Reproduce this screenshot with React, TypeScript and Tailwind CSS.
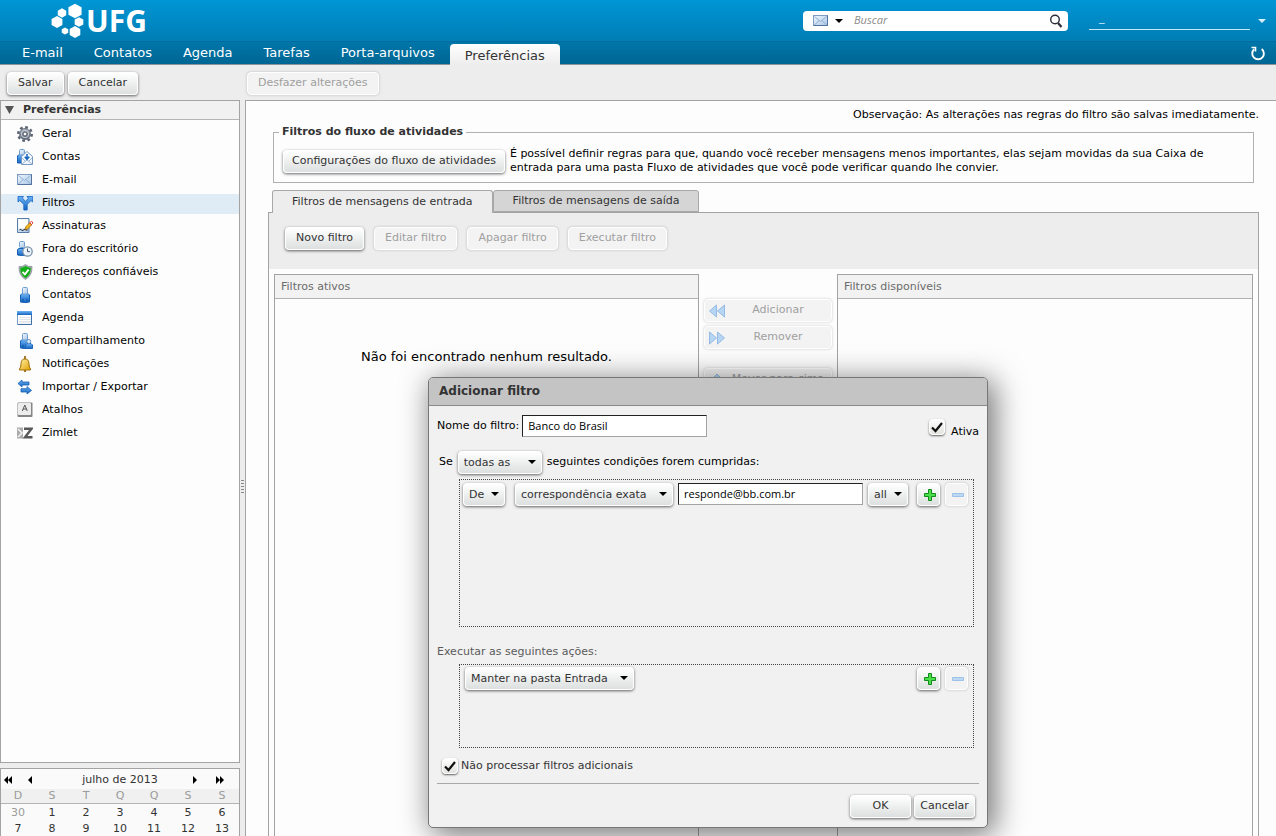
import { useState, type ReactNode } from "react";
import clsx from "clsx";

type IconName =
  | "gear"
  | "account"
  | "mail"
  | "filter"
  | "signature"
  | "away"
  | "shield"
  | "person"
  | "calendar"
  | "share"
  | "bell"
  | "transfer"
  | "key"
  | "zimlet";

const NAV_ITEMS = ["E-mail", "Contatos", "Agenda", "Tarefas", "Porta-arquivos"];

const PREFERENCES: { label: string; icon: IconName }[] = [
  { label: "Geral", icon: "gear" },
  { label: "Contas", icon: "account" },
  { label: "E-mail", icon: "mail" },
  { label: "Filtros", icon: "filter" },
  { label: "Assinaturas", icon: "signature" },
  { label: "Fora do escritório", icon: "away" },
  { label: "Endereços confiáveis", icon: "shield" },
  { label: "Contatos", icon: "person" },
  { label: "Agenda", icon: "calendar" },
  { label: "Compartilhamento", icon: "share" },
  { label: "Notificações", icon: "bell" },
  { label: "Importar / Exportar", icon: "transfer" },
  { label: "Atalhos", icon: "key" },
  { label: "Zimlet", icon: "zimlet" },
];

const WEEKDAYS = ["D", "S", "T", "Q", "Q", "S", "S"];
const WEEKS = [
  [30, 1, 2, 3, 4, 5, 6],
  [7, 8, 9, 10, 11, 12, 13],
];

function Gradients() {
  return (
    <svg className="absolute size-0" aria-hidden="true">
      <defs>
        <linearGradient id="blue" x1="0" y1="0" x2="0" y2="1">
          <stop offset="0" stopColor="#6db3f5" />
          <stop offset="1" stopColor="#1464c0" />
        </linearGradient>
        <linearGradient id="pale" x1="0" y1="0" x2="1" y2="1">
          <stop offset="0" stopColor="#f2f8fd" />
          <stop offset="1" stopColor="#a9c6e6" />
        </linearGradient>
        <linearGradient id="gold" x1="0" y1="0" x2="1" y2="1">
          <stop offset="0" stopColor="#fff2a8" />
          <stop offset="1" stopColor="#e0a000" />
        </linearGradient>
        <linearGradient id="steel" x1="0" y1="0" x2="0" y2="1">
          <stop offset="0" stopColor="#a9b0bb" />
          <stop offset="1" stopColor="#5d6676" />
        </linearGradient>
      </defs>
    </svg>
  );
}

function Person() {
  return (
    <>
      <path d="M3.500 8 5 6.500h6L12.500 8v7q-4.500 1-9 0z" fill="url(#blue)" stroke="#1560b4" />
      <rect x="5.500" y=".5" width="5" height="6.500" rx="1" fill="url(#pale)" stroke="#6f9fd0" />
      <path d="M6 11.500V15M10 11.500V15" stroke="#0d55a8" />
    </>
  );
}

function Envelope() {
  return (
    <>
      <rect x=".5" y="2.500" width="14" height="10" fill="url(#pale)" stroke="#7f9dc0" />
      <path d="M14.500 2.500v10H1" fill="none" stroke="#54739c" />
      <path d="m1.500 3.500 6 5 6-5M1.500 12 6 7.500M13.500 12 9 7.500" fill="none" stroke="#8eadd2" />
    </>
  );
}

const DRAWINGS: Record<IconName, ReactNode> = {
  gear: (
    <>
      <circle cx="8" cy="8" r="6.800" fill="none" stroke="#596272" strokeWidth="2.400" strokeDasharray="2.700 2.640" />
      <circle cx="8" cy="8" r="5.500" fill="url(#steel)" stroke="#5b6473" strokeWidth=".8" />
      <circle cx="8" cy="8" r="3.700" fill="none" stroke="#c6ccd4" />
      <circle cx="8" cy="8" r="2" fill="#fff" stroke="#4d5665" />
    </>
  ),
  account: (
    <>
      <path d="M.5 7 2 5.500h5V14H.5z" fill="url(#blue)" stroke="#1560b4" />
      <rect x="2.500" y=".5" width="5" height="5.500" rx="1" fill="url(#pale)" stroke="#6f9fd0" />
      <path d="M4.500 7.500 10 2.500l5.500 5v8h-11z" fill="#f1f7fc" stroke="#7698c2" />
      <path d="m5 15 5-4 5 4M5 9l3 3M15 9l-3 3" fill="none" stroke="#9ab6d6" />
      <path d="M10 5v5M7.800 7.800 10 10.300l2.200-2.500" fill="none" stroke="#1464c0" strokeWidth="1.500" />
    </>
  ),
  mail: <Envelope />,
  filter: (
    <path
      d="M1 1.500h5.500L5.300 2.900 8.500 6.400 11.300 3.300 10 1.500H15.700V7L14 5.600 10.200 9.300V15H6.800V9.300L2.700 5.500 1 7z"
      fill="url(#blue)"
      stroke="#0f62c4"
      strokeWidth=".8"
    />
  ),
  signature: (
    <>
      <path d="M.5.5h11.500v14H.5z" fill="url(#pale)" stroke="#5a7da5" />
      <path d="M1.500 1.500h9.500v9H1.500z" fill="#fff" />
      <path d="M2.500 12q1.500-1.500 2 0t2 0 2 0h2" fill="none" stroke="#111" />
      <path d="m8 11.500.7-2.700 4-4 2.100 2.100-4.100 4z" fill="#f2b821" stroke="#97630a" strokeWidth=".7" />
      <path d="m12.700 4.800 1-1q1-.6 1.700.2.700 1-.1 1.700l-.8.900z" fill="#fff" stroke="#e02222" />
    </>
  ),
  away: (
    <>
      <path d="M.5 8.500 2 7.500h7V14q-4 1-8.500 0z" fill="url(#blue)" stroke="#1560b4" />
      <rect x="2.500" y=".5" width="5" height="6" rx="1" fill="url(#pale)" stroke="#6f9fd0" />
      <circle cx="10.500" cy="10.500" r="4.700" fill="#eef4fa" stroke="#7690aa" strokeWidth="1.300" />
      <path d="M10.500 7.500v3.200h2.500" fill="none" stroke="#405a78" />
    </>
  ),
  shield: (
    <>
      <path d="M8.500.5Q11 3 15 2.500q.5 9-6.500 13-7-4-6.500-13 4 .5 6.500-2z" fill="#aab0b6" stroke="#7f878e" strokeWidth=".7" />
      <path d="M8.500 2Q11 4 13.800 3.800q.2 7-5.300 10.400Q3 10.800 3.200 3.800 6 4 8.500 2z" fill="#12ad17" />
      <path d="m5.500 7.800 2.400 2.600 3.700-4.800" fill="none" stroke="#fff" strokeWidth="1.900" />
    </>
  ),
  person: <Person />,
  calendar: (
    <>
      <path d="M.5 1.500h14v13H.5z" fill="#fff" stroke="#739bc8" />
      <path d="M0 1h15v4H0z" fill="url(#blue)" />
      <path d="M2.500 7.500h11M2.500 9.500h11M2.500 11.500h11M2.500 13h11" stroke="#bec8d2" strokeDasharray="1 1" />
      <path d="M14.500 5v9.500H1" fill="none" stroke="#3f71a9" />
    </>
  ),
  share: (
    <>
      <Person />
      <path d="M8.500 12 10 10.500h4l1.500 1.500v3.500h-7z" fill="url(#blue)" stroke="#1d64b2" />
      <circle cx="11.800" cy="8.500" r="2" fill="#d7e8f8" stroke="#6795c6" />
    </>
  ),
  bell: (
    <>
      <path d="M8 0v3M8 14v2" stroke="#91640a" strokeWidth="1.700" />
      <path d="M2.500 13q1.500-1.500 1.500-5Q4 3 8 3t4 5q0 3.500 1.500 5v1h-11z" fill="url(#gold)" stroke="#a2700b" />
    </>
  ),
  transfer: (
    <>
      <path d="M1 4.500 5 1v2h7v3H5v2z" fill="url(#blue)" stroke="#1560b4" strokeWidth=".8" />
      <path d="M14.500 11.500 10 7.500v2.200H4v3.300h6V15z" fill="url(#blue)" stroke="#1560b4" strokeWidth=".8" />
    </>
  ),
  key: (
    <>
      <rect x=".5" y=".5" width="15" height="14.500" rx="1" fill="#858585" />
      <rect x="1" y="1" width="13" height="12" rx="1" fill="#ececec" />
      <path d="m5.300 9 2.500-6 2.500 6M6 7h3.600" fill="none" stroke="#555" />
    </>
  ),
  zimlet: (
    <>
      <path d="M0 2.500h6v11H0z" fill="#ababab" />
      <path d="m1 4 4 4-4 4" fill="none" stroke="#f2f2f2" strokeWidth="1.500" />
      <path d="M7 3.700h7.500L8 12.300h7.500" fill="none" stroke="#575757" strokeWidth="2.400" />
    </>
  ),
};

function Icon({ name }: { name: IconName }) {
  return (
    <svg viewBox="0 0 16 16" className="size-4 shrink-0" aria-hidden="true">
      {DRAWINGS[name]}
    </svg>
  );
}

function Caret({ className }: { className?: string }) {
  return (
    <svg viewBox="0 0 8 4" className={clsx("h-1 w-2 shrink-0 fill-current", className)} aria-hidden="true">
      <path d="M0 0h8L4 4z" />
    </svg>
  );
}

function Button({
  children,
  className = "",
  ...props
}: React.ButtonHTMLAttributes<HTMLButtonElement>) {
  return (
    <button
      type="button"
      className={clsx(
        "flex h-[23px] shrink-0 items-center justify-center whitespace-nowrap rounded-[4px] border border-white",
        props.disabled
          ? "bg-[#f3f3f3] text-[#a0a0a0] shadow-[0_0_3px_#0003]"
          : "bg-linear-to-b from-white to-[#dde0e0] text-[#333] shadow-[0_1px_3px_#0009]",
        className
      )}
      {...props}
    >
      {children}
    </button>
  );
}

function Select({ label, value, className }: { label: string; value: string; className: string }) {
  return (
    <div className={clsx("relative shrink-0", className)}>
      <select
        aria-label={label}
        className="block h-[23px] w-full appearance-none rounded-[4px] border border-white bg-linear-to-b from-white to-[#dde0e0] pt-px pl-[5px] text-[#333] shadow-[0_1px_3px_#0009]"
      >
        <option>{value}</option>
      </select>
      <Caret className="pointer-events-none absolute top-[9px] right-[6px] text-black" />
    </div>
  );
}

function Checkbox({ id }: { id: string }) {
  const [checked, setChecked] = useState(true);
  return (
    <span className="relative size-4 shrink-0">
      <input
        id={id}
        type="checkbox"
        checked={checked}
        onChange={() => setChecked(!checked)}
        className="block size-4 appearance-none rounded-[4px] border border-white bg-linear-to-b from-white to-[#e2e2de] shadow-[0_1px_2px_#0009]"
      />
      {checked && (
        <svg viewBox="0 0 16 16" className="pointer-events-none absolute inset-0 size-4" aria-hidden="true">
          <path d="m3 8.500 3.500 3.500L13 4" fill="none" stroke="#111" strokeWidth="2.200" />
        </svg>
      )}
    </span>
  );
}

function PlusMinus({ target }: { target: string }) {
  return (
    <div className="flex shrink-0 gap-[5px]">
      <Button className="w-[23px]" aria-label={`Adicionar ${target}`}>
        <svg viewBox="0 0 12 12" className="ml-[3px] size-3 shrink-0" aria-hidden="true">
          <path d="M4.500.5h3v4h4v3h-4v4h-3v-4h-4v-3h4z" fill="#4cdf4c" stroke="#108a18" />
        </svg>
      </Button>
      <Button className="w-[23px]" aria-label={`Remover ${target}`} disabled>
        <svg viewBox="0 0 12 12" className="ml-[3px] size-3 shrink-0" aria-hidden="true">
          <path d="M.5 4.500h11v3H.5z" fill="#bcd8f3" stroke="#9fc2e8" />
        </svg>
      </Button>
    </div>
  );
}

function Logo() {
  const cells = [
    [24, 11, 7.3],
    [11, 13, 4.7],
    [6, 22, 6],
    [28, 22, 4.8],
    [14, 31, 3.6],
    [24, 32, 5.9],
  ];
  return (
    <a href="#" className="ml-[51px] flex items-start gap-px text-white">
      <svg viewBox="0 0 34 40" className="h-10 w-[34px]" aria-hidden="true">
        {cells.map(([x, y, r]) => (
          <polygon
            key={`${x}-${y}`}
            fill="white"
            points={`${x},${y - r} ${x + r * 0.9},${y - r / 2} ${x + r * 0.9},${y + r / 2} ${x},${y + r} ${x - r * 0.9},${y + r / 2} ${x - r * 0.9},${y - r / 2}`}
          />
        ))}
      </svg>
      <span className="font-['Noto_Sans',sans-serif] text-[30px] leading-[42px] font-bold">UFG</span>
    </a>
  );
}

function Header() {
  return (
    <header className="shrink-0">
      <div className="flex h-[41px] justify-between bg-linear-to-b from-[#0096d6] to-[#007db4]">
        <Logo />
        <div className="flex items-center pr-[10px]">
          <form className="flex h-5 w-[265px] items-center rounded-[4px] bg-white pr-[5px] pl-[10px]">
            <button type="button" aria-label="Tipo de busca" className="flex items-center gap-[6px] text-black">
              <Icon name="mail" />
              <Caret />
            </button>
            <input
              aria-label="Buscar"
              placeholder="Buscar"
              className="ml-[11px] min-w-0 flex-1 font-['Open_Sans',sans-serif] outline-none placeholder:text-[#8b8b8b] placeholder:italic"
            />
            <button type="button" aria-label="Pesquisar">
              <svg viewBox="0 0 14 14" className="size-[14px]" fill="none" stroke="#2b2f3a" aria-hidden="true">
                <circle cx="6" cy="5.500" r="4.300" strokeWidth="1.400" />
                <path d="m9 9 3.500 4" strokeWidth="2.200" />
              </svg>
            </button>
          </form>
          <button type="button" aria-label="Conta" className="ml-[21px] flex items-center gap-[8px] text-[#d5eefa]">
            <span className="h-[19px] w-[161px] border-b border-[#c5e8f7] pl-[10px] text-left leading-[14px]">_</span>
            <Caret />
          </button>
        </div>
      </div>
      <nav className="flex h-6 items-center justify-between border-t border-b border-t-[#006c9f] border-b-[#8d9499] bg-linear-to-b from-[#0076a8] to-[#006694] pr-[10px] text-[13px]">
        <div className="flex h-full items-center">
          <ul className="flex gap-[31px] pr-[15px] pl-[22px] text-white">
            {NAV_ITEMS.map((item) => (
              <li key={item}>
                <a href="#">{item}</a>
              </li>
            ))}
          </ul>
          <a
            href="#"
            aria-current="page"
            className="z-10 -mb-[3px] h-[21px] rounded-t-[4px] bg-linear-to-b from-white to-[#ededed] px-[15px] leading-6 text-[#333]"
          >
            Preferências
          </a>
        </div>
        <button type="button" aria-label="Atualizar">
          <svg viewBox="0 0 16 16" className="size-4" fill="none" stroke="white" strokeWidth="1.900" aria-hidden="true">
            <path d="M4.200 4.200A5.800 5.800 0 1 0 11.700 4" />
            <path d="M1.500 2.500h4V6.500" strokeWidth="1.600" />
          </svg>
        </button>
      </nav>
    </header>
  );
}

function ArrowIcon({ path }: { path: string }) {
  return (
    <svg viewBox="0 0 10 8" className="h-2 w-[10px] fill-black" aria-hidden="true">
      <path d={path} />
    </svg>
  );
}

function MiniCalendar() {
  return (
    <section className="mt-[5px] border border-b-0 border-[#a3a3a3] bg-[#fafafa] text-[#333]">
      <div className="flex h-5 items-center px-[3px] pt-[2px]">
        <div className="flex w-12 gap-3">
          <button type="button" aria-label="Ano anterior">
            <ArrowIcon path="M4 0v8L0 4zM8 0v8L4 4z" />
          </button>
          <button type="button" aria-label="Mês anterior">
            <ArrowIcon path="M6 0v8L2 4z" />
          </button>
        </div>
        <span className="flex-1 text-center">julho de 2013</span>
        <div className="flex w-12 gap-4">
          <button type="button" aria-label="Próximo mês">
            <ArrowIcon path="M5 0v8l4-4z" />
          </button>
          <button type="button" aria-label="Próximo ano">
            <ArrowIcon path="M2 0v8l4-4zM6 0v8l4-4z" />
          </button>
        </div>
      </div>
      <table className="w-full table-fixed text-center">
        <thead className="border-b border-[#b5b5b5] bg-[#f0f0f0] text-[#9a9a9a]">
          <tr>
            {WEEKDAYS.map((day, i) => (
              <th key={i} scope="col" className="font-normal leading-[14px]">
                {day}
              </th>
            ))}
          </tr>
        </thead>
        <tbody>
          {WEEKS.map((week) => (
            <tr key={week[0]}>
              {week.map((day) => (
                <td key={day} className={clsx("pt-px leading-[15px]", day === 30 && "text-[#9a9a9a]")}>
                  {day}
                </td>
              ))}
            </tr>
          ))}
        </tbody>
      </table>
    </section>
  );
}

function Sidebar() {
  const [selected, setSelected] = useState(3);
  return (
    <aside className="flex w-60 shrink-0 flex-col">
      <section className="flex-1 border border-[#a3a3a3] bg-[#fdfdfd]">
        <h2 className="flex h-[19px] items-center gap-[9px] border-b border-[#b5b5b5] bg-[#f1f1f1] pl-1 font-bold text-[#333]">
          <svg viewBox="0 0 9 8" className="h-2 w-[9px] fill-[#555]" aria-hidden="true">
            <path d="M0 0h9L4.500 8z" />
          </svg>
          Preferências
        </h2>
        <ul className="flex flex-col gap-[3px] pt-[5px]">
          {PREFERENCES.map((item, i) => (
            <li key={item.label + i}>
              <button
                type="button"
                onClick={() => setSelected(i)}
                className={clsx(
                  "flex h-5 w-full items-start gap-[9px] pl-4 text-left leading-[18px]",
                  i === selected && "bg-[#dfebf5]"
                )}
              >
                <span className="pt-px">
                  <Icon name={item.icon} />
                </span>
                {item.label}
              </button>
            </li>
          ))}
        </ul>
      </section>
      <MiniCalendar />
    </aside>
  );
}

function FilterList({ title, children, className }: { title: string; children?: ReactNode; className: string }) {
  return (
    <section className={clsx("border border-[#a3a3a3]", className)}>
      <h3 className="h-6 border-b border-[#b0b0b0] bg-[#f2f2f2] pl-[6px] leading-6 text-[#6b6b6b]">{title}</h3>
      {children}
    </section>
  );
}

function MoveButton({ label, path, className }: { label: string; path: string; className?: string }) {
  return (
    <Button disabled className={clsx("w-full pl-1", className)}>
      <svg viewBox="0 0 16 14" className="h-[14px] w-4 shrink-0" fill="#b5d5f3" stroke="#95bbe4" aria-hidden="true">
        <path d={path} />
      </svg>
      <span className="flex-1 text-center">{label}</span>
    </Button>
  );
}

function FiltersPage() {
  return (
    <main className="flex min-w-0 flex-1 flex-col overflow-hidden border-t border-l border-[#a3a3a3] bg-[#fdfdfd] pr-[17px] pl-[22px]">
      <p className="pt-[6px] text-right leading-4">
        Observação: As alterações nas regras do filtro são salvas imediatamente.
      </p>
      <fieldset className="mx-[5px] mt-px flex border border-[#b0b0b0] px-[5px]">
        <legend className="px-[3px] leading-4 font-bold text-[#333]">Filtros do fluxo de atividades</legend>
        <div className="flex items-center gap-[5px] py-[7px] pl-1">
          <Button className="px-2">Configurações do fluxo de atividades</Button>
          <p className="pr-2 leading-[14px]">
            É possível definir regras para que, quando você receber mensagens menos importantes, elas sejam movidas da
            sua Caixa de entrada para uma pasta Fluxo de atividades que você pode verificar quando lhe convier.
          </p>
        </div>
      </fieldset>

      <div role="tablist" className="mt-[7px] flex pl-1 text-[#333]">
        <button
          role="tab"
          aria-selected="true"
          type="button"
          className="z-10 -mb-px h-[23px] rounded-t-[3px] border border-b-0 border-[#a8a8a8] bg-[#ededed] px-[19px]"
        >
          Filtros de mensagens de entrada
        </button>
        <button
          role="tab"
          aria-selected="false"
          type="button"
          className="h-[22px] rounded-t-[3px] border border-[#a8a8a8] bg-[#d5d5d5] px-[19px]"
        >
          Filtros de mensagens de saída
        </button>
      </div>

      <div className="flex flex-1 flex-col border border-b-0 border-[#a3a3a3]">
        <div className="flex h-14 shrink-0 gap-[10px] bg-[#ededed] pt-[14px] pl-4">
          <Button className="px-[10px]">Novo filtro</Button>
          <Button disabled className="px-[10px]">
            Editar filtro
          </Button>
          <Button disabled className="px-[10px]">
            Apagar filtro
          </Button>
          <Button disabled className="px-[10px]">
            Executar filtro
          </Button>
        </div>
        <div className="flex flex-1 px-[5px] pt-[5px]">
          <FilterList title="Filtros ativos" className="flex-[425] border-b-0">
            <p className="pt-12 text-center text-[13px] leading-5">Não foi encontrado nenhum resultado.</p>
          </FilterList>
          <div className="flex w-[138px] shrink-0 flex-col gap-1 px-[5px] pt-[25px]">
            <MoveButton label="Adicionar" path="M7.500 1v12L.5 7zM15.500 1v12l-7-6z" />
            <MoveButton label="Remover" path="M.5 1v12l7-6zM8.500 1v12l7-6z" />
            <MoveButton label="Mover para cima" path="m8 1 6 6H2z" className="mt-[15px]" />
          </div>
          <FilterList title="Filtros disponíveis" className="flex-[416] border-b-0" />
        </div>
      </div>
    </main>
  );
}

const INPUT_CLASS =
  "h-[22px] w-[185px] border border-t-[#222] border-l-[#222] border-r-[#a3a3a3] border-b-[#a3a3a3] bg-white px-[5px] pb-px font-['Open_Sans',sans-serif] outline-none";

function AddFilterDialog() {
  const [name, setName] = useState("Banco do Brasil");
  const [address, setAddress] = useState("responde@bb.com.br");

  return (
    <div
      role="dialog"
      aria-labelledby="dialog-title"
      className="absolute top-[377px] left-[428px] z-20 w-[560px] rounded-[5px] border border-[#777] bg-[#f1f1f1] shadow-[5px_5px_30px_2px_#0008]"
    >
      <h2
        id="dialog-title"
        className="rounded-t-[4px] border-b border-[#8a8a8a] bg-[#c4c4c4] pl-[10px] text-[12px] leading-[27px] font-bold text-[#333]"
      >
        Adicionar filtro
      </h2>
      <div className="px-2 pt-[7px] pb-[9px]">
        <div className="flex h-[26px] items-center">
          <label htmlFor="filter-name" className="mr-[3px]">
            Nome do filtro:
          </label>
          <input id="filter-name" value={name} onChange={(e) => setName(e.target.value)} className={INPUT_CLASS} />
          <div className="ml-auto flex items-start gap-[6px] pt-2">
            <Checkbox id="active" />
            <label htmlFor="active" className="pt-1 leading-[18px]">
              Ativa
            </label>
          </div>
        </div>
        <div className="mt-3 flex items-center gap-[5px] pl-[2px]">
          <span>Se</span>
          <Select label="Combinação das condições" value="todas as" className="w-[84px]" />
          <span>seguintes condições forem cumpridas:</span>
        </div>
        <div className="mt-[5px] mr-[5px] ml-[22px] flex h-[148px] items-start border border-dotted border-[#444] py-[3px] pr-[5px] pl-[3px]">
          <Select label="Campo" value="De" className="mr-[10px] w-[42px]" />
          <Select label="Comparação" value="correspondência exata" className="mr-[5px] w-[158px]" />
          <input
            aria-label="Endereço"
            value={address}
            onChange={(e) => setAddress(e.target.value)}
            className={clsx(INPUT_CLASS, "mr-[5px]")}
          />
          <Select label="Parte do endereço" value="all" className="w-10" />
          <div className="ml-auto">
            <PlusMinus target="condição" />
          </div>
        </div>
        <p className="mt-[17px] leading-4 text-[#5b5b5b]">Executar as seguintes ações:</p>
        <div className="mt-1 mr-[5px] ml-[22px] flex h-[84px] items-start justify-between border border-dotted border-[#444] px-[5px] py-[2px]">
          <Select label="Ação" value="Manter na pasta Entrada" className="w-[169px]" />
          <PlusMinus target="ação" />
        </div>
        <div className="mt-[10px] flex gap-[3px] pl-[5px] text-[#333]">
          <Checkbox id="stop" />
          <label htmlFor="stop" className="leading-4">
            Não processar filtros adicionais
          </label>
        </div>
        <div className="mt-[9px] flex justify-end gap-[3px] border-t border-[#a8a8a8] pt-[11px] pr-1">
          <Button className="w-[61px]">OK</Button>
          <Button className="w-[61px]">Cancelar</Button>
        </div>
      </div>
    </div>
  );
}

export default function App() {
  return (
    <div className="relative flex h-screen flex-col overflow-hidden bg-[#ededed] font-['DejaVu_Sans',sans-serif] text-[11px] text-black">
      <Gradients />
      <Header />
      <div className="flex h-[35px] shrink-0 items-center pt-[2px] pl-[7px]">
        <div className="flex w-60 gap-1">
          <Button className="px-[10px]">Salvar</Button>
          <Button className="px-[10px]">Cancelar</Button>
        </div>
        <Button disabled className="px-[10px]">
          Desfazer alterações
        </Button>
      </div>
      <div className="flex min-h-0 flex-1">
        <Sidebar />
        <div className="flex w-[5px] shrink-0 justify-center pt-[380px]">
          <svg viewBox="0 0 3 14" className="h-[14px] w-[3px]" stroke="#888" aria-hidden="true">
            <path d="M0 .5h3M0 3.500h3M0 6.500h3M0 9.500h3M0 12.500h3" />
          </svg>
        </div>
        <FiltersPage />
      </div>
      <AddFilterDialog />
    </div>
  );
}
